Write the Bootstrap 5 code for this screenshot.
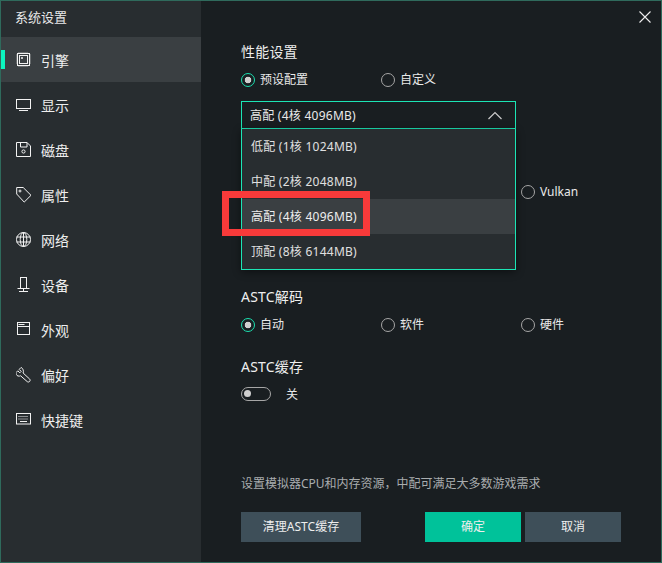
<!DOCTYPE html>
<html lang="zh"><head><meta charset="utf-8"><title>系统设置</title>
<link href="https://cdn.jsdelivr.net/npm/bootstrap@5.3.0/dist/css/bootstrap.min.css" rel="stylesheet">
<style>
html,body{margin:0;height:100%;background:#191e21;overflow:hidden}
body{font-family:"Noto Sans","Noto Sans CJK SC",sans-serif;color:#e9e9e9;font-size:12px}
.win{width:662px;height:563px;border:1px solid #2f6a5c;position:relative}
.side{width:200px;background:#282d30;flex:none}
.ttl{height:36px;padding-left:14px;font-size:13px;line-height:32px}
.nv{height:45px;padding-left:15px;gap:9px;font-size:14px;position:relative;color:#eee}
.nv svg{width:16px;height:16px;margin-top:1px;flex:none;fill:none;stroke:#f2f2f2;stroke-width:1}
.nv span{padding-top:2px}
.nv.on{background:#3a3f42}
.nv.on::before{content:"";position:absolute;left:0;top:13px;width:4px;height:19px;background:#0cf5bf}
.pane{padding:41px 40px 20px;position:relative}
.hd{font-size:14px;line-height:20px;height:20px;color:#eee;letter-spacing:.2px}
.rw{display:grid;grid-template-columns:140px 140px 1fr;height:20px;margin-top:7px}
.opt{gap:5px;line-height:20px;color:#e9e9e9}
.opt span:last-child{padding-top:1px}
.rd{width:14px;height:14px;border-radius:50%;border:1.5px solid #a6a6a6;flex:none}
.rd.sel{border-color:#1ce0b0;background:radial-gradient(circle,#cfcfcf 0 3px,transparent 3.6px)}
.sl{width:275px;margin-top:12px;position:relative}
.slb{height:28px;border:1px solid #1ce5b5;padding:0 8px;line-height:26px;color:#e9e9e9;letter-spacing:.25px}
.slb>span{padding-top:2px}
.slb svg{width:16px;height:9px;fill:none;stroke:#ccc;stroke-width:1.2;margin-right:4px}
.mn{position:absolute;top:100%;left:0;width:275px;min-width:0;margin:0!important;padding:0;background:#282d30;border:1px solid #1ce5b5;border-top:0;border-radius:0;box-shadow:0 2px 8px rgba(0,0,0,.45);font-size:12px}
.mn .dropdown-item{height:35px;line-height:35px;padding:0 9px;color:#e0e0e0;font-size:12px;letter-spacing:.25px}
.mn .dropdown-item.cur{background:#3a3f42;color:#eee}
.sw{width:30px;height:14px;border:1.5px solid #a6a6a6;border-radius:7px;position:relative;flex:none}
.sw::before{content:"";position:absolute;left:2px;top:2px;width:7px;height:7px;border-radius:50%;background:#cfcfcf}
.tg{height:20px;margin-top:7px;gap:15px}
.tg span:last-child{padding-top:1px}
.hnt{color:#a9adaf;font-size:12px;line-height:20px;height:18px;margin-top:auto}
.acts{margin-top:20px}
.bt{height:30px;border:0;border-radius:0;padding:0;font-size:12px;color:#eee;line-height:30px}
.bt-g{background:#3e4f59;width:120px}
.bt-s{background:#3e4f59;width:96px;margin-left:4px}
.bt-p{background:#00c29a;width:96px;margin-left:auto}
.cls{position:absolute;top:9px;right:9px;width:14px;height:14px;padding:0;border:0;background:none;line-height:0}
.cls svg{width:14px;height:14px;stroke:#eee;stroke-width:1.1;fill:none}
.mark-red{position:absolute;left:221px;top:190px;width:148px;height:45px;border:7px solid #f83a3a;z-index:1100}
.gapa{margin-top:52px}.gapb{margin-top:86px}.gapc{margin-top:23px}
</style></head>
<body>
<div class="win d-flex">
  <aside class="side d-flex flex-column">
    <div class="ttl">系统设置</div>
    <div class="nv on d-flex align-items-center"><svg viewBox="0 0 16 16"><rect x="1.5" y="1.5" width="12" height="12"/><rect x="3.500" y="3.500" width="8" height="8"/><path d="M5.500 5.500h1v1h-1z"/><path d="M3 .5v1M5 .5v1M7 .5v1M9 .5v1M11 .5v1M3 13.500v1M5 13.500v1M7 13.500v1M9 13.500v1M11 13.500v1M.5 3h1M.5 5h1M.5 7h1M.5 9h1M.5 11h1M13.500 3h1M13.500 5h1M13.500 7h1M13.500 9h1M13.500 11h1"/></svg><span>引擎</span></div>
    <div class="nv d-flex align-items-center"><svg viewBox="0 0 16 16"><rect x=".5" y="2.500" width="14" height="9"/><path d="M3 13.500h9"/></svg><span>显示</span></div>
    <div class="nv d-flex align-items-center"><svg viewBox="0 0 16 16"><path d="M.5 .5h10.500l3.500 3.500v10.500H.5z"/><path d="M4.500 .5v4.500h6.500v-4.500"/><circle cx="7.500" cy="9.500" r="1.600"/></svg><span>磁盘</span></div>
    <div class="nv d-flex align-items-center"><svg viewBox="0 0 16 16"><path d="M.7 .5h6.500l7.800 7.800-6.800 6.800L.7 7z"/><circle cx="4" cy="4" r="1"/></svg><span>属性</span></div>
    <div class="nv d-flex align-items-center"><svg viewBox="0 0 16 16"><circle cx="7.500" cy="7.500" r="7"/><ellipse cx="7.500" cy="7.500" rx="3.300" ry="7"/><path d="M.5 5h14M.5 10h14M7.500 .5v14"/></svg><span>网络</span></div>
    <div class="nv d-flex align-items-center"><svg viewBox="0 0 16 16"><rect x="4.500" y=".5" width="6" height="11"/><path d="M1.500 11.500h12M7.500 11.500v3M3 14.500h9"/></svg><span>设备</span></div>
    <div class="nv d-flex align-items-center"><svg viewBox="0 0 16 16"><rect x="1.500" y=".5" width="12" height="12"/><path d="M1.500 4.500h12"/><path d="M2.500 2.500h6"/></svg><span>外观</span></div>
    <div class="nv d-flex align-items-center"><svg viewBox="0 0 16 16"><path d="M5 .5 3.200 2.400l2 2-1.400 1.400-2-2L.1 5.500c-.2 1.600.4 3 1.900 3.500 1 .3 1.800.1 2.600-.2l6.600 5.800c.8.6 1.700.6 2.400-.1s.7-1.700.1-2.400L7.100 6c.4-1 .5-1.900.1-2.900C6.800 1.900 6.300.9 5 .5z"/></svg><span>偏好</span></div>
    <div class="nv d-flex align-items-center"><svg viewBox="0 0 16 16"><rect x=".5" y="1.500" width="14" height="10.500"/><path d="M2.500 4.500h10M2.500 7h10" stroke-dasharray="1 1"/><path d="M4 9.500h7"/></svg><span>快捷键</span></div>
  </aside>
  <main class="pane flex-grow-1 d-flex flex-column">
    <button class="cls" type="button" aria-label="关闭"><svg viewBox="0 0 14 14"><path d="M1.500 1.500l11 11M12.500 1.500l-11 11"/></svg></button>
    <div class="hd">性能设置</div>
    <div class="rw">
      <div class="opt d-flex align-items-center"><span class="rd sel"></span><span>预设配置</span></div>
      <div class="opt d-flex align-items-center"><span class="rd"></span><span>自定义</span></div>
    </div>
    <div class="dropdown sl">
      <div class="slb d-flex justify-content-between align-items-center"><span>高配 (4核 4096MB)</span><svg viewBox="0 0 16 9"><path d="M1.500 8 8 1.500 14.500 8"/></svg></div>
      <div class="dropdown-menu show mn">
        <a class="dropdown-item" href="#">低配 (1核 1024MB)</a>
        <a class="dropdown-item" href="#">中配 (2核 2048MB)</a>
        <a class="dropdown-item cur" href="#">高配 (4核 4096MB)</a>
        <a class="dropdown-item" href="#">顶配 (8核 6144MB)</a>
      </div>
    </div>
    <div class="rw gapa">
      <div></div><div></div>
      <div class="opt d-flex align-items-center"><span class="rd"></span><span>Vulkan</span></div>
    </div>
    <div class="hd gapb">ASTC解码</div>
    <div class="rw">
      <div class="opt d-flex align-items-center"><span class="rd sel"></span><span>自动</span></div>
      <div class="opt d-flex align-items-center"><span class="rd"></span><span>软件</span></div>
      <div class="opt d-flex align-items-center"><span class="rd"></span><span>硬件</span></div>
    </div>
    <div class="hd gapc">ASTC缓存</div>
    <div class="tg d-flex align-items-center"><span class="sw"></span><span>关</span></div>
    <div class="hnt">设置模拟器CPU和内存资源，中配可满足大多数游戏需求</div>
    <div class="acts d-flex">
      <button class="btn bt bt-g" type="button">清理ASTC缓存</button>
      <button class="btn bt bt-p" type="button">确定</button>
      <button class="btn bt bt-s" type="button">取消</button>
    </div>
  </main>
  <div class="mark-red"></div>
</div>
<script src="https://cdn.jsdelivr.net/npm/bootstrap@5.3.0/dist/js/bootstrap.bundle.min.js"></script>
</body></html>
